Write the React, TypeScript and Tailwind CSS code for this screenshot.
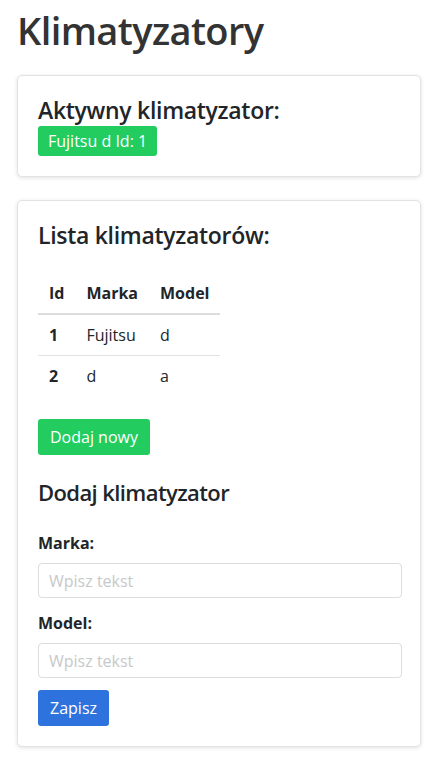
const FONT = "font-['Open_Sans','Noto_Sans',sans-serif]";

const rows = [
  { id: 1, brand: "Fujitsu", model: "d" },
  { id: 2, brand: "d", model: "a" },
];

function Card({ children, className = "" }: { children: React.ReactNode; className?: string }) {
  return (
    <div
      className={`w-[404px] rounded-[5px] border border-[#e3e3e3] bg-white px-[20px] shadow-[0_1px_4px_rgba(0,0,0,0.12)] ${className}`}
    >
      {children}
    </div>
  );
}

function Field({ label }: { label: string }) {
  return (
    <div>
      <label className="block text-[16px] font-bold leading-6 text-[#212529]">{label}</label>
      <input
        type="text"
        placeholder="Wpisz tekst"
        className="mt-[8px] block h-[35px] w-[364px] rounded-[4px] border border-[#dcdcdc] px-[10px] text-[16px] text-[#212529] outline-none placeholder:text-[#c8c8c8]"
      />
    </div>
  );
}

export default function App() {
  return (
    <div className={`min-h-[772px] bg-white pl-[17px] text-[#212529] ${FONT}`}>
      <h1 className="pt-[7px] text-[38px] font-semibold leading-[47px] tracking-[-0.6px] text-[#333]">
        Klimatyzatory
      </h1>

      <Card className="mt-[21px] pb-[20px] pt-[20px]">
        <h2 className="text-[23px] font-semibold leading-[29px] tracking-[-0.3px]">Aktywny klimatyzator:</h2>
        <span className="mt-[1px] inline-block rounded-[3px] bg-[#22cc5f] px-[10px] py-[3px] text-[16px] leading-6 text-white">
          Fujitsu d Id: 1
        </span>
      </Card>

      <Card className="mt-[23px] pb-[20px] pt-[20px]">
        <h2 className="text-[23px] font-semibold leading-[29px] tracking-[-0.3px]">Lista klimatyzatorów:</h2>

        <table className="mt-[23px] border-collapse text-[16px] leading-6">
          <thead>
            <tr className="border-b-2 border-[#dcdcdc]">
              <th className="px-[11px] py-[8px] text-left font-bold">Id</th>
              <th className="px-[11px] py-[8px] text-left font-bold">Marka</th>
              <th className="px-[11px] py-[8px] text-left font-bold">Model</th>
            </tr>
          </thead>
          <tbody>
            {rows.map((r, i) => (
              <tr key={r.id} className={i < rows.length - 1 ? "border-b border-[#e2e2e2]" : ""}>
                <td className="px-[11px] py-[8px] font-bold">{r.id}</td>
                <td className="px-[11px] py-[8px]">{r.brand}</td>
                <td className="px-[11px] py-[8px]">{r.model}</td>
              </tr>
            ))}
          </tbody>
        </table>

        <button className="mt-[23px] block rounded-[3px] bg-[#22cc5f] px-[12px] py-[6px] text-[16px] leading-6 text-white">
          Dodaj nowy
        </button>

        <h3 className="mt-[22px] text-[22px] font-semibold leading-[31px] tracking-[-0.6px]">Dodaj klimatyzator</h3>

        <div className="mt-[23px] flex flex-col gap-[13px]">
          <Field label="Marka:" />
          <Field label="Model:" />
        </div>

        <button className="mt-[12px] block rounded-[3px] bg-[#2e72de] px-[12px] py-[6px] text-[16px] leading-6 text-white">
          Zapisz
        </button>
      </Card>
    </div>
  );
}
